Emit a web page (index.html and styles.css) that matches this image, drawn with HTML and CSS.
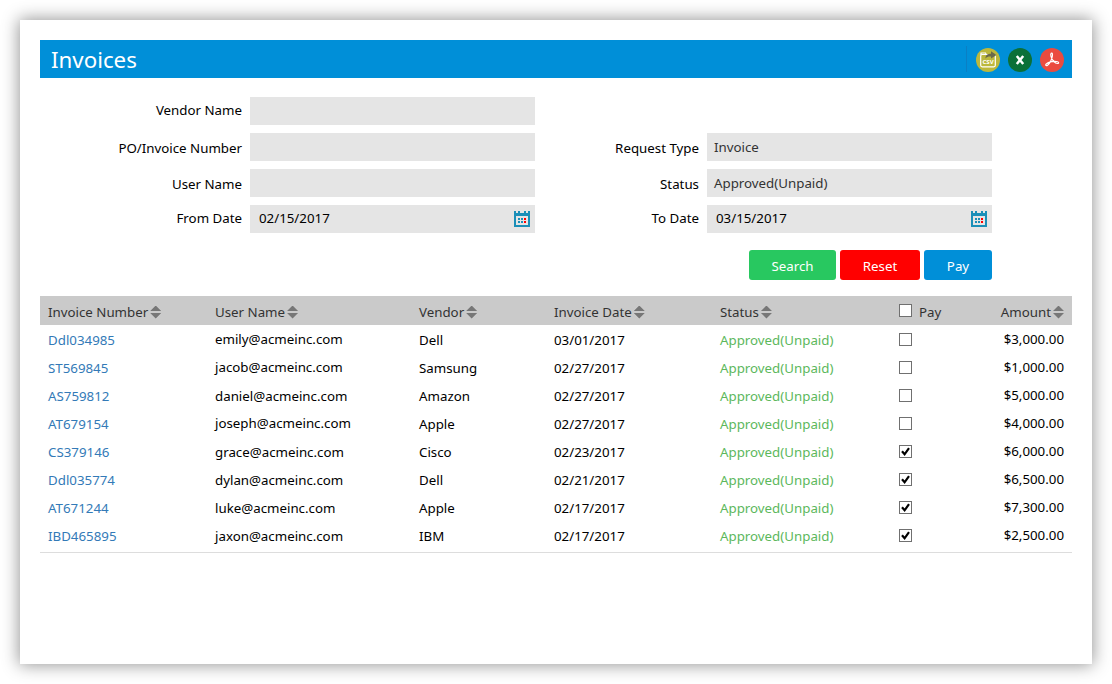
FILE: index.html
```
<!DOCTYPE html>
<html lang="en">
<head>
  <meta charset="UTF-8">
  <meta name="viewport" content="width=device-width, initial-scale=1.0">
  <title>Invoices</title>
  <link rel="stylesheet" href="styles.css">
</head>
<body>
  <div class="container">
    <div class="title-bar">
      <h1>Invoices</h1>
      <div class="export">
        <svg class="export-icon" viewBox="0 0 24 24">
          <circle cx="12" cy="12" r="12" fill="#bcb83c"/>
          <path d="M5 7v-2h4.500l1 2" fill="none" stroke="#fff" stroke-width="1.200"/>
          <rect x="4.700" y="6.500" width="14.600" height="12.300" rx="1.500" fill="none" stroke="#fff" stroke-width="1.200"/>
          <path d="M9.500 10.500c0-3.300 2.200-4.700 5.500-4.700V3.300l5.500 3.700-5.500 3.500V8.500c-2.500-.2-4 .3-5.500 2z" fill="#6b6a4a"/>
          <text x="12" y="16.300" class="csv-text">CSV</text>
        </svg>
        <svg class="export-icon" viewBox="0 0 24 24">
          <circle cx="12" cy="12" r="12" fill="#0a7038"/>
          <path d="M8.800 8l6.400 8M15.200 8l-6.400 8" stroke="#fff" stroke-width="2.500"/>
        </svg>
        <svg class="export-icon" viewBox="0 0 24 24">
          <circle cx="12" cy="12" r="12" fill="#ea4b3f"/>
          <path d="M11.200 5.200c1.200-.6 1.500 1 1.100 3.200-.7 3.500-2.700 7.200-4.700 8.800-1.500 1-2.600 0-1.300-1.200 2.100-1.800 6.600-2.900 10.400-2.500 2.300.3 2.500 2 .7 2-2.500 0-5.500-3.600-6.400-7.100-.4-1.600-.4-2.700.2-3.200z" fill="none" stroke="#fff" stroke-width="1.200"/>
        </svg>
      </div>
    </div>

    <form class="search-form">
      <label class="up">Vendor Name</label>
      <div class="field"></div>
      <span></span>
      <span></span>

      <label>PO/Invoice Number</label>
      <div class="field"></div>
      <label>Request Type</label>
      <div class="field select">Invoice</div>

      <label>User Name</label>
      <div class="field"></div>
      <label>Status</label>
      <div class="field select">Approved(Unpaid)</div>

      <label class="up">From Date</label>
      <div class="field date">02/15/2017
        <svg class="calendar" viewBox="0 0 16 16" shape-rendering="crispEdges">
          <path d="M0 0h2v2h2V0h2v2h4V0h2v2h2V0h2v16H0z" fill="#1b8fb8"/>
          <path d="M2 5h12v9H2z" fill="#e5e5e5"/>
          <path d="M4 7h2v2H4zM7 7h2v2H7zM4 10h2v2H4zM7 10h2v2H7z" fill="#1b8fb8"/>
          <path d="M10 7h2v2h-2zM10 10h2v2h-2z" fill="#f00"/>
        </svg>
      </div>
      <label class="up">To Date</label>
      <div class="field date">03/15/2017
        <svg class="calendar" viewBox="0 0 16 16" shape-rendering="crispEdges">
          <path d="M0 0h2v2h2V0h2v2h4V0h2v2h2V0h2v16H0z" fill="#1b8fb8"/>
          <path d="M2 5h12v9H2z" fill="#e5e5e5"/>
          <path d="M4 7h2v2H4zM7 7h2v2H7zM4 10h2v2H4zM7 10h2v2H7z" fill="#1b8fb8"/>
          <path d="M10 7h2v2h-2zM10 10h2v2h-2z" fill="#f00"/>
        </svg>
      </div>
    </form>

    <div class="buttons">
      <button class="btn btn-search">Search</button>
      <button class="btn btn-reset">Reset</button>
      <button class="btn btn-pay">Pay</button>
    </div>

    <table>
      <colgroup>
        <col class="col-number">
        <col class="col-user">
        <col class="col-vendor">
        <col class="col-date">
        <col class="col-status">
        <col class="col-pay">
        <col>
      </colgroup>
      <thead>
        <tr>
          <th>Invoice Number<i class="sort"></i></th>
          <th>User Name<i class="sort"></i></th>
          <th>Vendor<i class="sort"></i></th>
          <th>Invoice Date<i class="sort"></i></th>
          <th>Status<i class="sort"></i></th>
          <th><span class="check check-all"></span><span class="pay-label">Pay</span></th>
          <th class="amount">Amount<i class="sort"></i></th>
        </tr>
      </thead>
      <tbody id="invoices-body">
        <!-- Invoice rows will be inserted here -->
      </tbody>
    </table>
  </div>

  <script>
    const invoices = [
      { number: 'Ddl034985', user: 'emily', vendor: 'Dell', date: '03/01/2017', amount: '$3,000.00', pay: false },
      { number: 'ST569845', user: 'jacob', vendor: 'Samsung', date: '02/27/2017', amount: '$1,000.00', pay: false },
      { number: 'AS759812', user: 'daniel', vendor: 'Amazon', date: '02/27/2017', amount: '$5,000.00', pay: false },
      { number: 'AT679154', user: 'joseph', vendor: 'Apple', date: '02/27/2017', amount: '$4,000.00', pay: false },
      { number: 'CS379146', user: 'grace', vendor: 'Cisco', date: '02/23/2017', amount: '$6,000.00', pay: true },
      { number: 'Ddl035774', user: 'dylan', vendor: 'Dell', date: '02/21/2017', amount: '$6,500.00', pay: true },
      { number: 'AT671244', user: 'luke', vendor: 'Apple', date: '02/17/2017', amount: '$7,300.00', pay: true },
      { number: 'IBD465895', user: 'jaxon', vendor: 'IBM', date: '02/17/2017', amount: '$2,500.00', pay: true }
    ];

    const tick = '<svg viewBox="0 0 11 11"><path d="M2 5.300l2.600 3L9 2.200" fill="none" stroke="#000" stroke-width="2.200"/></svg>';
    const invoicesBody = document.getElementById('invoices-body');

    invoices.forEach((invoice, index) => {
      const row = document.createElement('tr');
      row.innerHTML = `
        <td><a class="invoice-link">${invoice.number}</a></td>
        <td class="${index < 4 && index !== 2 ? 'raised' : ''}">${invoice.user}@acmeinc.com</td>
        <td>${invoice.vendor}</td>
        <td>${invoice.date}</td>
        <td class="status">Approved(Unpaid)</td>
        <td class="raised"><span class="check">${invoice.pay ? tick : ''}</span></td>
        <td class="amount raised">${invoice.amount}</td>
      `;
      invoicesBody.appendChild(row);
    });
  </script>
</body>
</html>
```
FILE: styles.css
```
:root {
  --blue: #008fd8;
  --field: #e5e5e5;
}

* {
  box-sizing: border-box;
}

body {
  font-family: 'Noto Sans', 'Open Sans', sans-serif;
  font-size: 13.3px;
  color: #000;
  background-color: #fff;
  margin: 0;
  padding: 20px;
}

.container {
  height: 644px;
  padding: 20px;
  background-color: #fff;
  box-shadow: 0 0 16px 1px rgba(0, 0, 0, 0.42);
}

/* Title bar */
.title-bar {
  display: flex;
  justify-content: space-between;
  align-items: center;
  height: 38px;
  padding: 0 8px 0 11px;
  background-color: var(--blue);
}

h1 {
  margin: 0;
  color: #fff;
  font-size: 22.3px;
  font-weight: normal;
}

.export {
  display: flex;
  gap: 8px;
  padding: 2px 0 0 9px;
  border-left: 1px solid #0a7fc4;
}

.export-icon {
  display: block;
  width: 24px;
  height: 24px;
}

.csv-text {
  font-size: 6px;
  font-weight: bold;
  fill: #fff;
  text-anchor: middle;
}

/* Search form */
.search-form {
  display: grid;
  grid-template-columns: 210px 285px 172px 285px;
  grid-auto-rows: 28px;
  row-gap: 8px;
  margin-top: 19px;
}

label {
  padding-right: 8px;
  line-height: 30px;
  text-align: right;
}

label.up {
  line-height: 27px;
}

.field {
  height: 28px;
  padding: 0 7px;
  line-height: 28px;
  background-color: var(--field);
}

.select {
  color: #333;
}

.date {
  display: flex;
  justify-content: space-between;
  padding: 0 5px 0 9px;
  line-height: 27px;
}

.calendar {
  width: 16px;
  height: 16px;
  margin-top: 6px;
}

/* Buttons */
.buttons {
  display: flex;
  justify-content: flex-end;
  gap: 4px;
  margin: 17px 80px 16px 0;
}

.btn {
  height: 30px;
  padding: 2px 0 0;
  border: none;
  border-radius: 3px;
  color: #fff;
  font-family: inherit;
  font-size: 13.3px;
}

.btn-search {
  width: 87px;
  background-color: #28c860;
}

.btn-reset {
  width: 80px;
  background-color: #f00;
}

.btn-pay {
  width: 68px;
  background-color: var(--blue);
}

/* Invoice table */
table {
  width: 100%;
  table-layout: fixed;
  border-collapse: separate;
  border-spacing: 0;
  border-bottom: 1px solid #ddd;
  padding-bottom: 3px;
}

.col-number { width: 167px; }
.col-user { width: 204px; }
.col-vendor { width: 135px; }
.col-date { width: 166px; }
.col-status { width: 179px; }
.col-pay { width: 80px; }

th, td {
  height: 28px;
  padding: 2px 8px 0;
  text-align: left;
  font-weight: normal;
  white-space: nowrap;
}

th {
  height: 29px;
  background-color: #cacaca;
  color: #333;
}

td.raised {
  padding-top: 0;
}

.amount {
  text-align: right;
}

.invoice-link {
  color: #337ab7;
}

.status {
  color: #5cb85c;
}

.sort {
  display: inline-block;
  width: 11px;
  height: 13px;
  margin-left: 2px;
  vertical-align: -2px;
  background-color: #777;
  clip-path: polygon(50% 0, 100% 42%, 0 42%, 0 58%, 100% 58%, 50% 100%, 0 58%, 0 42%);
}

.check {
  display: inline-block;
  width: 13px;
  height: 13px;
  border: 1px solid #707070;
  background-color: #fff;
  vertical-align: -2px;
}

.check-all {
  vertical-align: 0;
}

.check svg {
  display: block;
}

.pay-label {
  margin-left: 7px;
}
```
